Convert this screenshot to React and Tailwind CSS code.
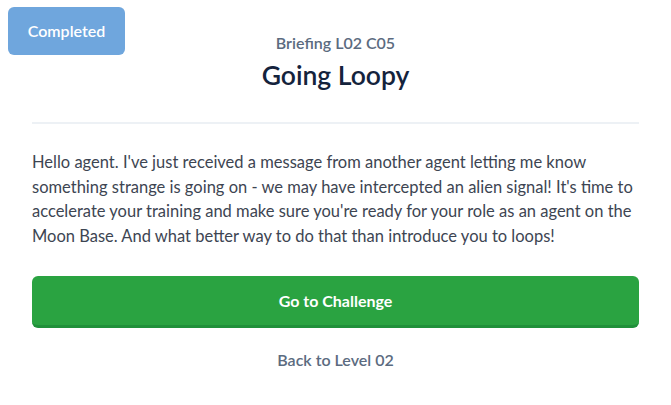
import React from 'react';

export default function App() {
    return (
        <div className="relative min-h-[405px] bg-white px-8 pt-[33px] text-[#3c4858]" style={{ fontFamily: 'Lato, "Open Sans", sans-serif' }}>
            {/* status badge */}
            <div className="absolute left-2 top-[7px] flex h-12 w-[117px] items-center justify-center rounded-md bg-[#6fa6dd] text-[16px] font-semibold text-white">
                Completed
            </div>

            <div className="text-center">
                <p className="text-[16px] font-semibold leading-5 text-[#5b6b80]">Briefing L02 C05</p>
                <h1 className="mt-[6px] text-[26.5px] font-semibold leading-8 text-[#14233c]">Going Loopy</h1>
            </div>

            <hr className="mt-[31px] border-t-2 border-[#edf1f5]" />

            <p className="mt-[26px] text-[16.5px] leading-[24.5px] text-[#3d4552]">
                Hello agent. I've just received a message from another agent letting me know something strange is going on - we may have intercepted an alien signal! It's time to accelerate your training and make sure you're ready for your role as an agent on the Moon Base. And what better way to do that than introduce you to loops!
            </p>

            <button className="mt-[28px] flex h-[52px] w-full items-center justify-center rounded-md border-b-[3px] border-[#20903a] bg-[#2aa341] text-[16px] font-bold text-white">
                Go to Challenge
            </button>

            <div className="mt-[20px] text-center">
                <a href="#" className="text-[16px] font-semibold text-[#5b6b80]">Back to Level 02</a>
            </div>
        </div>
    );
}
